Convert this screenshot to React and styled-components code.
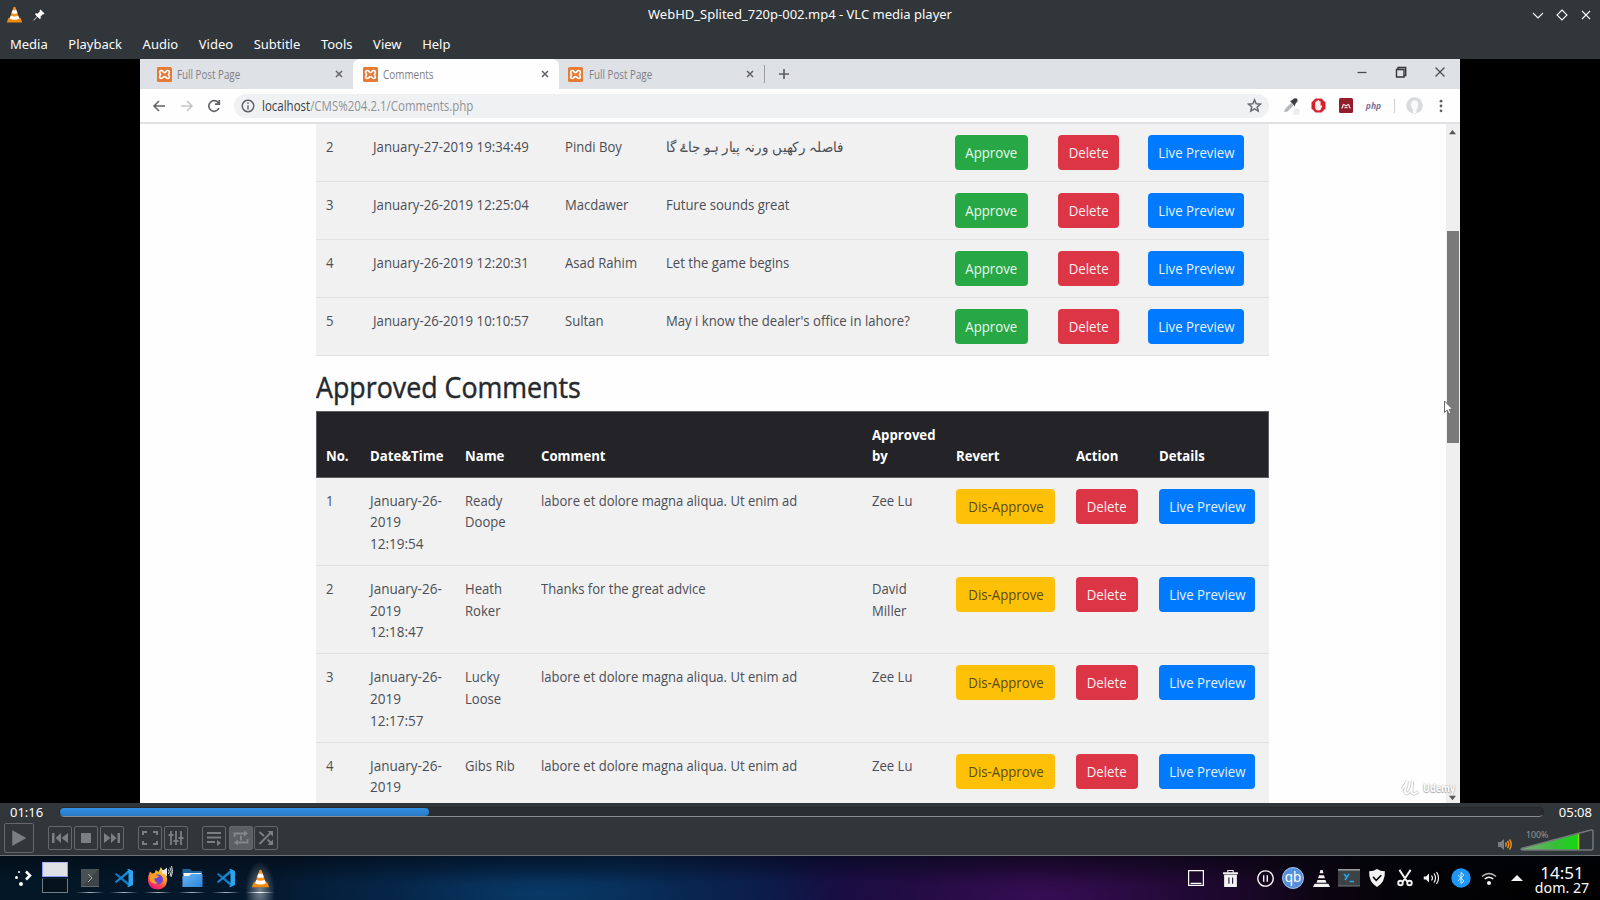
import React from "react";
import styled, { createGlobalStyle } from "styled-components";

const Global = createGlobalStyle`
  * { box-sizing: border-box; }
  html, body { margin: 0; padding: 0; background: #000; overflow: hidden; }
  svg { display: block; flex: none; }
`;

const Desktop = styled.div`
  width: 1600px;
  height: 900px;
  display: flex;
  flex-direction: column;
  font-family: "Noto Sans", "Open Sans", sans-serif;
  font-size: 13px;
  color: #fcfcfc;
  background: #31363b;
`;

/* ---------- player window ---------- */

const TitleBar = styled.header`
  height: 29px;
  display: grid;
  grid-template-columns: 200px 1fr 200px;
  align-items: center;
  padding-left: 6px;
  padding-right: 6px;
`;
const TitleLeft = styled.div`
  display: flex;
  align-items: center;
  gap: 10px;
`;
const TitleText = styled.div`
  text-align: center;
  padding-bottom: 1px;
`;
const TitleButtons = styled.div`
  display: flex;
  justify-content: flex-end;
  gap: 8px;
`;

const MenuBar = styled.nav`
  height: 30px;
  display: flex;
  align-items: center;
  gap: 20.6px;
  padding-left: 10px;
`;
const MenuItem = styled.span`
  line-height: 20px;
`;

const Stage = styled.main`
  height: 744px;
  background: #000;
  display: flex;
  justify-content: center;
`;

/* ---------- recorded browser ---------- */

const Browser = styled.section`
  position: relative;
  width: 1320px;
  height: 744px;
  overflow: hidden;
  display: flex;
  flex-direction: column;
  background: #fefefe;
  color: #4c4e55;
  font-family: "Open Sans", "Noto Sans", sans-serif;
`;
const Condensed = styled.span`
  display: inline-block;
  white-space: nowrap;
  transform: scaleX(${p => p.$by || 0.91});
  transform-origin: ${p => p.$origin || "left"} center;
`;

const TabStrip = styled.div`
  height: 30px;
  flex: none;
  display: flex;
  background: #dee1e6;
`;
const Tab = styled.div`
  width: ${p => p.$width}px;
  height: 30px;
  display: flex;
  align-items: center;
  padding: 0 9px 0 ${p => p.$pad}px;
  background: ${p => (p.$active ? "#fefefe" : "transparent")};
  border-radius: 7px 7px 0 0;
  font-size: 12.4px;
  color: #7e8086;
`;
const TabTitle = styled.div`
  flex: 1;
  padding-left: 5.5px;
`;
const TabDivider = styled.i`
  width: 1px;
  height: 18px;
  margin: 6px 12px 0 0;
  background: #9a9ca1;
`;
const NewTab = styled.div`
  display: flex;
  align-items: center;
  flex: 1;
`;
const WindowButtons = styled.div`
  display: flex;
  align-items: center;
  gap: 23px;
  padding: 0 12px 4px 0;
`;

const AddressBar = styled.div`
  height: 35px;
  flex: none;
  display: flex;
  align-items: center;
  padding-left: 11px;
  border-bottom: 2px solid #dfe1e4;
  background: #fefefe;
`;
const NavButtons = styled.div`
  display: flex;
  gap: 11.5px;
  width: 83px;
`;
const Omnibox = styled.div`
  width: 1035px;
  height: 24px;
  border-radius: 12px;
  background: #f0f1f3;
  display: flex;
  align-items: center;
  padding: 0 7px 0 7px;
  font-size: 13.6px;
  color: #919398;
`;
const Url = styled.div`
  flex: 1;
  padding-left: 7px;
  b { font-weight: 400; color: #3d3f43; }
`;
const Extensions = styled.div`
  flex: 1;
  display: grid;
  grid-template-columns: 28px 27px 28px 27px 14px 26px 28px;
  justify-items: center;
  align-items: center;
  padding-left: 8px;
`;
const PhpBadge = styled.span`
  font: italic 700 8.6px "Open Sans", sans-serif;
  color: #7a7399;
`;
const ThinRule = styled.i`
  width: 1px;
  height: 14px;
  background: #cdcfd2;
`;

const Viewport = styled.div`
  flex: 1;
  min-height: 0;
  display: flex;
  justify-content: space-between;
`;
const Content = styled.div`
  width: 953.5px;
  margin-left: 175.7px;
  overflow: hidden;
`;
const ScrollTrack = styled.div`
  width: 14.5px;
  height: 679px;
  background: #efeff0;
  display: flex;
  flex-direction: column;
  align-items: center;
  justify-content: space-between;
  padding: 5px 0 2px;
`;
const ScrollThumb = styled.div`
  width: 12px;
  height: 212px;
  margin-bottom: 256px;
  background: #7a7a7b;
`;

const Row = styled.div`
  display: grid;
  grid-template-columns: ${p => p.$columns};
  height: ${p => p.$height}px;
  padding-left: 10px;
  border-bottom: 1px solid #dee1e4;
  background: #f1f1f2;
  font-size: 14.4px;
  line-height: 21.6px;
`;
const Cell = styled.div`
  padding-top: ${p => p.$top || 12.4}px;
  white-space: pre-line;
`;
const HeadRow = styled(Row)`
  height: 67.3px;
  align-items: end;
  padding-bottom: 10px;
  background: #242428;
  border: 1px solid #5c5d61;
  padding-left: 9px;
  color: #fff;
  font-weight: 700;
`;
const HeadCell = styled.div`
  white-space: pre-line;
`;
const Heading = styled.h2`
  margin: 0;
  height: 54.6px;
  padding-top: 11.4px;
  font-size: 28.8px;
  line-height: 39px;
  font-weight: 500;
  -webkit-text-stroke: 0.45px #26292e;
  color: #26292e;
`;
const palette = {
  approve: ["#28a745", "#e9f8ec"],
  delete: ["#dc3545", "#fdeef0"],
  preview: ["#007bff", "#e6f2ff"],
  revert: ["#ffc107", "#5a4a14"],
};
const Action = styled.button`
  display: flex;
  align-items: center;
  justify-content: center;
  width: ${p => p.$width}px;
  height: 35px;
  margin: ${p => p.$top}px 0 0;
  padding: 0;
  border: 0;
  border-radius: 4px;
  background: ${p => palette[p.$kind][0]};
  color: ${p => palette[p.$kind][1]};
  font: 14.4px "Open Sans", sans-serif;
`;

const Pointer = styled.div`
  position: absolute;
  left: 1303px;
  top: 341px;
`;
const Watermark = styled.div`
  position: absolute;
  left: 1261px;
  top: 720px;
  display: flex;
  align-items: center;
  gap: 3px;
  font: 700 10.5px "Open Sans", sans-serif;
  color: #fff;
  text-shadow: 0 0 2px #8e8e8e, 0 1px 1px #b5b5b5;
`;

/* ---------- player controls ---------- */

const SeekRow = styled.div`
  height: 18px;
  flex: none;
  display: flex;
  align-items: center;
  justify-content: space-between;
  padding: 0 8px 0 10px;
`;
const SeekTrack = styled.div`
  width: 1485px;
  height: 10px;
  border: 1px solid #26292c;
  border-bottom-color: #8b8e90;
  border-radius: 5px;
  background: #2a2e32;
`;
const SeekFill = styled.div`
  width: 369px;
  height: 8px;
  border-radius: 4px;
  background: linear-gradient(#2f8fe3, #2a79c8);
`;
const Controls = styled.div`
  height: 34px;
  flex: none;
  display: flex;
  align-items: center;
  padding: 0 6px 0 4px;
`;
const ControlButton = styled.button`
  width: ${p => p.$size || 24}px;
  height: ${p => p.$size || 24}px;
  margin: 0 0 0 ${p => p.$gap || 0}px;
  padding: 0;
  display: flex;
  align-items: center;
  justify-content: center;
  border: 1px solid #64686b;
  border-radius: 2px;
  background: ${p => (p.$on ? "#5c6064" : "transparent")};
  color: #7c7f81;
`;
const Volume = styled.div`
  margin-left: auto;
  display: flex;
  align-items: flex-end;
  gap: 7px;
  padding-top: 4px;
`;
const VolumeMeter = styled.div`
  display: grid;
  width: 74px;
  > * { grid-area: 1 / 1; }
`;
const VolumeLabel = styled.span`
  padding-left: 6px;
  font-size: 8.8px;
  line-height: 13px;
  color: #92969a;
`;

/* ---------- desktop panel ---------- */

const Panel = styled.footer`
  height: 45px;
  flex: none;
  display: flex;
  align-items: center;
  border-top: 1px solid #6b7175;
  background:
    linear-gradient(180deg, rgba(0, 5, 12, 0.45), transparent 60%),
    radial-gradient(ellipse 300px 60px at 540px 38px, rgba(8, 62, 110, 0.85), rgba(6, 46, 88, 0.5) 50%, transparent),
    radial-gradient(ellipse 280px 60px at 1040px 40px, rgba(58, 14, 92, 0.8), rgba(42, 10, 70, 0.45) 55%, transparent),
    linear-gradient(90deg, #041726 0, #04182c 280px, #08244a 620px, #120f42 840px, #220a33 1040px, #160720 1220px, #040306 1400px, #000 1600px);
`;
const Launcher = styled.div`
  width: 42px;
  padding-left: 12px;
`;
const Pager = styled.div`
  width: 31px;
  display: grid;
  gap: 1px;
  padding-bottom: 2px;
`;
const PagerDesk = styled.div`
  width: 26px;
  height: 15px;
  border: 1px solid ${p => (p.$current ? "#8f9cff" : "#68808c")};
  border-top-color: ${p => (p.$current ? "#b8aef5" : "#102430")};
  background: ${p => (p.$current ? "#dfe1e4" : "#05121b")};
`;
const Task = styled.div`
  width: 34px;
  height: 44px;
  display: flex;
  align-items: center;
  justify-content: center;
  background:
    linear-gradient(90deg, transparent, ${p => (p.$active ? "#fff" : "#a9bac5")}, transparent) 50% 36px / 28px 1px no-repeat
    ${p => p.$active && ", radial-gradient(ellipse 15px 30px at 50% 80%, rgba(190,200,210,.6), transparent)"};
`;
const Tray = styled.div`
  margin-left: auto;
  display: flex;
  align-items: center;
`;
const TraySlot = styled.div`
  width: ${p => p.$width || 28}px;
  margin-right: ${p => p.$gap || 0}px;
  display: flex;
  justify-content: center;
`;
const Clock = styled.div`
  width: 69px;
  padding: 1px 7px 0 0;
  text-align: center;
  div:first-child { font-size: 17px; line-height: 17px; }
  div:last-child { font-size: 14.2px; line-height: 13px; }
`;

/* ---------- drawings ---------- */

const Cone = ({ size = 18 }) => (
  <svg width={size} height={size} viewBox="0 0 18 18">
    <path d="M2.6 12.5h12.8L17.2 17.4H.8z" fill="#f08a0c" />
    <path d="M8 1.2q1-1 2 0L14.3 14q-5.300 2.400-10.600 0z" fill="#f7931e" />
    <path d="M6.900 4.500h4.200l1.100 3.300q-3.200 1-6.400 0zM4.900 10.400q4.100 1.300 8.200 0l1 3q-5.100 2.400-10.200 0z" fill="#fff" />
  </svg>
);
const Pin = () => (
  <svg width="12" height="12" viewBox="0 0 12 12" fill="#fcfcfc">
    <path d="M7.500.5 11.500 4.500 10.400 5.400 9.800 5.200 7.600 7.400 7.700 9.400 6.700 10 4.400 7.800.8 11.500.4 11.100 4 7.400 2 5.300 2.700 4.300 4.800 4.400 6.900 2.200 6.600 1.500z" />
  </svg>
);
const Favicon = () => (
  <svg width="15" height="15" viewBox="0 0 15 15">
    <rect width="15" height="15" rx="1.500" fill="#e57a35" />
    <path d="M4.300 3.500c2 0 1.800 2 3.200 2s1.200-2 3.200-2c2.700 0 1.700 4 0 4 1.700 0 2.700 4 0 4-2 0-1.800-2-3.200-2s-1.200 2-3.200 2c-2.700 0-1.700-4 0-4-1.700 0-2.700-4 0-4z" fill="none" stroke="#fff" strokeWidth="1.700" />
  </svg>
);
const Line = ({ d, size = 16, color = "currentColor", width = 1.5, box = 16 }) => (
  <svg width={size} height={size} viewBox={`0 0 ${box} ${box}`} fill="none" stroke={color} strokeWidth={width}>
    <path d={d} />
  </svg>
);
const Solid = ({ d, size = 16, color = "currentColor", box = 16 }) => (
  <svg width={size} height={size} viewBox={`0 0 ${box} ${box}`} fill={color}>
    <path d={d} fillRule="evenodd" />
  </svg>
);
const CloseTab = () => <Line size={10} box={10} color="#64666b" width={1.6} d="M2 2l6 6M8 2L2 8" />;

const VsCode = () => (
  <svg width="20" height="20" viewBox="0 0 20 20">
    <path d="M.8 6.300 2.300 5 15 15v3.500z" fill="#0f7ac5" />
    <path d="M.8 13.700 2.300 15 15 5V1.500z" fill="#1787d4" />
    <path d="M14 .7 19 3v14l-5 2.300-.8-.8 1.300-.8V2.300l-1.300-.8z" fill="#2aa7f2" />
  </svg>
);
const Firefox = () => (
  <svg width="30" height="26" viewBox="-2 0 30 26">
    <defs>
      <linearGradient id="fox" x1="0.800" y1="0" x2="0.300" y2="1">
        <stop offset="0" stopColor="#ffe63b" />
        <stop offset="0.450" stopColor="#ff9a1f" />
        <stop offset="0.750" stopColor="#ff3f4e" />
        <stop offset="1" stopColor="#e31587" />
      </linearGradient>
    </defs>
    <path d="M4 9 5 6.500 7 8.500 9.500 8 11 5l2.500 2L16 2q1.500 4 4 6.500 2.500 3 2 7.500-1 8-9 8.500-8.500 0-10-8Q2.500 12 4 9z" fill="url(#fox)" />
    <circle cx="13" cy="14.500" r="5" fill="#7243d8" />
    <path d="M4.500 10q4-1.500 7.500.5l2 1q-1.500 2-4.500 1.700Q9 16.500 13 18q-5 2-8-2z" fill="#ff9e25" />
    <path d="M17 5h2l3-2.500v9L19 8.500h-2z" fill="#e9e9e9" />
    <path d="M23.500 4.500q1.500 2 0 4.500M25 2.500q2.500 4 0 8.500M26.500 1q2.500 5.500-.5 11" stroke="#dcdcdc" fill="none" />
  </svg>
);
const Folder = () => (
  <svg width="21" height="20" viewBox="0 0 21 20">
    <defs>
      <linearGradient id="fold" x1="0" y1="0" x2="1" y2="1">
        <stop offset="0" stopColor="#69b5f5" />
        <stop offset="1" stopColor="#2a86dc" />
      </linearGradient>
    </defs>
    <path d="M.5 1h7.500l2 2h10v4H.5z" fill="#1f659d" />
    <path d="M1.500 5h18v4h-18z" fill="#f4f4f4" />
    <path d="M.5 8h6.500l2-2h11.500v13H.5z" fill="url(#fold)" />
  </svg>
);
const Konsole = () => (
  <svg width="18" height="18" viewBox="0 0 18 18">
    <rect width="18" height="18" fill="#4a5154" />
    <path d="M0 18 18 0v18z" fill="#3d4447" />
    <path d="M7 5l4 4-4 4" stroke="#a6acae" fill="none" />
    <path d="M0 17.500h18" stroke="#62686b" />
  </svg>
);

const speakerPath = "M1 6h3l4-4v12l-4-4H1z";

/* ---------- data ---------- */

const menus = ["Media", "Playback", "Audio", "Video", "Subtitle", "Tools", "View", "Help"];

const pending = [
  ["2", "January-27-2019 19:34:49", "Pindi Boy", "فاصلہ رکھیں ورنہ پیار ہو جاۓ گا"],
  ["3", "January-26-2019 12:25:04", "Macdawer", "Future sounds great"],
  ["4", "January-26-2019 12:20:31", "Asad Rahim", "Let the game begins"],
  ["5", "January-26-2019 10:10:57", "Sultan", "May i know the dealer's office in lahore?"],
];
const lorem = "labore et dolore magna aliqua. Ut enim ad";
const approved = [
  ["1", "January-26-\n2019\n12:19:54", "Ready\nDoope", lorem, "Zee Lu"],
  ["2", "January-26-\n2019\n12:18:47", "Heath\nRoker", "Thanks for the great advice", "David\nMiller"],
  ["3", "January-26-\n2019\n12:17:57", "Lucky\nLoose", lorem, "Zee Lu"],
  ["4", "January-26-\n2019", "Gibs Rib", lorem, "Zee Lu"],
];
const pendingColumns = "47px 192.300px 101.200px 288.500px 103px 90px 1fr";
const approvedColumns = "44.400px 94.600px 76px 331px 84.800px 120px 82.400px 1fr";

const Text = styled(Condensed)`
  white-space: pre;
`;

function ActionButton({ kind, width, top, children }) {
  return (
    <Action $kind={kind} $width={width} $top={top}>
      <Condensed $origin="center" $by={0.92}>{children}</Condensed>
    </Action>
  );
}

function BrowserTab({ title, width, pad, active }) {
  return (
    <Tab $width={width} $pad={pad} $active={active}>
      <Favicon />
      <TabTitle><Condensed $by={active ? 0.8 : 0.79}>{title}</Condensed></TabTitle>
      <CloseTab />
    </Tab>
  );
}

function RecordedBrowser() {
  return (
    <Browser>
      <TabStrip>
        <BrowserTab title="Full Post Page" width={213} pad={16.5} />
        <BrowserTab title="Comments" width={205.5} pad={9.5} active />
        <BrowserTab title="Full Post Page" width={205.500} pad={9.5} />
        <TabDivider />
        <NewTab><Line size={14} box={14} color="#5d5f64" width={1.7} d="M7 2v10M2 7h10" /></NewTab>
        <WindowButtons>
          <Line size={16} color="#4a4c50" width={1.3} d="M3.500 8.500h9" />
          <Line size={16} color="#33353a" width={1.4} d="M3.500 5.500h7.500v7.500h-7.500zM5 5V3.500h7.700v8H11" />
          <Line size={16} color="#4a4c50" width={1.3} d="M3.500 3.500l9 9M12.500 3.500l-9 9" />
        </WindowButtons>
      </TabStrip>
      <AddressBar>
        <NavButtons>
          <Line color="#606266" d="M14 8H3M8 3L3 8l5 5" />
          <Line color="#c3c5c8" d="M2 8h11M8 3l5 5-5 5" />
          <Line color="#606266" width={1.7} d="M12.500 5A5.300 5.300 0 1 0 13 10M13.300 2v4.200H9" />
        </NavButtons>
        <Omnibox>
          <Line size={14} color="#5f6165" width={1.6} d="M8 1.500a6.500 6.500 0 1 0 .01 0M8 7v5M8 4v1.600" />
          <Url><Condensed $by={0.845}><b>localhost</b>/CMS%204.2.1/Comments.php</Condensed></Url>
          <Line size={15} color="#66686c" width={1.6} d="M8 2l1.800 4.100 4.500.4-3.400 3 1 4.400L8 11.600l-3.900 2.300 1-4.400-3.400-3 4.500-.4z" />
        </Omnibox>
        <Extensions>
          <svg width="18" height="18" viewBox="0 0 18 18">
            <path d="M2 15l1-3 6-6 2.500 2.500-6 6z" fill="#b5b7b9" />
            <path d="M8 4l1.500-.5L12 1.500q2.500-1 3.500 1 .5 2-1 3l-1.300 1.700-.2 2.300z" fill="#3c3e42" />
            <circle cx="14.500" cy="15" r="3.500" fill="#eeeeef" />
          </svg>
          <svg width="15" height="15" viewBox="0 0 15 15">
            <path d="M4.500.5h6l4 4v6l-4 4h-6l-4-4v-6z" fill="#d8202c" />
            <path d="M4.200 7V4.200q.7-.8 1.200 0V3q.8-.9 1.400 0v-.5q.8-.8 1.400 0V3.500q.8-.8 1.400 0V8l1-.8q1 0 .6 1l-1.500 3.300q-.8 1-2 1-3 .2-3.500-2.500z" fill="#fff3f0" />
          </svg>
          <svg width="14" height="15" viewBox="0 0 14 15">
            <rect width="14" height="15" rx="1.500" fill="#941d2b" />
            <path d="M2.500 10q1.200 0 1.300-2 .4-2 1.400-1.300L7 7.800l1.800-1.100q1-.7 1.400 1.300.1 2 1.300 2M5.500 10Q7 8.800 8.500 10" stroke="#f4dfe1" strokeWidth="1.300" fill="none" />
          </svg>
          <PhpBadge>php</PhpBadge>
          <ThinRule />
          <svg width="17" height="17" viewBox="0 0 17 17">
            <circle cx="8.500" cy="8.500" r="8.300" fill="#d9dadb" />
            <ellipse cx="8.700" cy="8" rx="3.600" ry="4.800" fill="#fafafa" />
            <path d="M7 11h3.500v5H7z" fill="#fafafa" />
          </svg>
          <svg width="4" height="14" viewBox="0 0 4 14" fill="#5f6165">
            <circle cx="2" cy="2.200" r="1.400" /><circle cx="2" cy="7" r="1.400" /><circle cx="2" cy="11.800" r="1.400" />
          </svg>
        </Extensions>
      </AddressBar>

      <Viewport>
        <Content>
          {pending.map(([no, date, name, comment]) => (
            <Row key={no} $columns={pendingColumns} $height={58}>
              <Cell><Text>{no}</Text></Cell>
              <Cell><Text $by={0.917}>{date}</Text></Cell>
              <Cell><Text>{name}</Text></Cell>
              <Cell><Text $by={no === "2" ? 0.96 : 0.912}>{comment}</Text></Cell>
              <ActionButton kind="approve" width={73.5} top={11}>Approve</ActionButton>
              <ActionButton kind="delete" width={61.5} top={11}>Delete</ActionButton>
              <ActionButton kind="preview" width={96.5} top={11}>Live Preview</ActionButton>
            </Row>
          ))}
          <Heading><Condensed $by={0.93}>Approved Comments</Condensed></Heading>
          <HeadRow $columns={approvedColumns}>
            {["No.", "Date&Time", "Name", "Comment", "Approved\nby", "Revert", "Action", "Details"].map(h => (
              <HeadCell key={h}><Text $by={0.915}>{h}</Text></HeadCell>
            ))}
          </HeadRow>
          {approved.map(([no, date, name, comment, by]) => (
            <Row key={no} $columns={approvedColumns} $height={88.3}>
              <Cell $top={12}><Text>{no}</Text></Cell>
              <Cell $top={12}><Text $by={0.94}>{date}</Text></Cell>
              <Cell $top={12}><Text>{name}</Text></Cell>
              <Cell $top={12}><Text $by={0.905}>{comment}</Text></Cell>
              <Cell $top={12}><Text>{by}</Text></Cell>
              <ActionButton kind="revert" width={98.500} top={11}>Dis-Approve</ActionButton>
              <ActionButton kind="delete" width={61.500} top={11}>Delete</ActionButton>
              <ActionButton kind="preview" width={96.500} top={11}>Live Preview</ActionButton>
            </Row>
          ))}
        </Content>
        <ScrollTrack>
          <Solid size={7} box={8} color="#55575a" d="M4 1l4 5H0z" />
          <ScrollThumb />
          <Solid size={7} box={8} color="#55575a" d="M0 2h8L4 7z" />
        </ScrollTrack>
      </Viewport>

      <Pointer>
        <svg width="12" height="16" viewBox="0 0 12 16">
          <path d="M1.500 1v11.500l2.700-2.400 1.800 4 2-1-1.800-3.800h3.500z" fill="#fff" stroke="#6a6a6c" />
        </svg>
      </Pointer>
      <Watermark>
        <svg width="19" height="18" viewBox="0 0 19 18">
          <path d="M1 10Q5 5 6 2q0 5-2 9-.5 4 2.500 3.500Q11 12 11.500 2q-1 7-.8 11 1.300 4 6.800-.5" fill="none" stroke="#c4c4c4" strokeWidth="3.400" />
          <path d="M1 10Q5 5 6 2q0 5-2 9-.5 4 2.500 3.500Q11 12 11.500 2q-1 7-.8 11 1.300 4 6.800-.5" fill="none" stroke="#fff" strokeWidth="1.900" />
        </svg>
        <Condensed $by={0.87}>Udemy</Condensed>
      </Watermark>
    </Browser>
  );
}

export default function App() {
  return (
    <Desktop>
      <Global />
      <TitleBar>
        <TitleLeft><Cone size={17} /><Pin /></TitleLeft>
        <TitleText>WebHD_Splited_720p-002.mp4 - VLC media player</TitleText>
        <TitleButtons>
          <Line width={1.1} d="M3 6l5 5 5-5" />
          <Line width={1.1} d="M8 3l5 5-5 5-5-5z" />
          <Line width={1.1} d="M4 4l8 8M12 4l-8 8" />
        </TitleButtons>
      </TitleBar>
      <MenuBar>{menus.map(m => <MenuItem key={m}>{m}</MenuItem>)}</MenuBar>

      <Stage><RecordedBrowser /></Stage>

      <SeekRow>
        <span>01:16</span>
        <SeekTrack><SeekFill /></SeekTrack>
        <span>05:08</span>
      </SeekRow>
      <Controls>
        <ControlButton $size={30}><Solid size={18} d="M2 1l12.500 7L2 15z" /></ControlButton>
        <ControlButton $gap={14}><Solid d="M0 3h2.500v10H0zM9 3v10L3.500 8zM16 3v10L9.500 8z" /></ControlButton>
        <ControlButton $gap={2}><Solid d="M3 3h10v10H3z" /></ControlButton>
        <ControlButton $gap={2}><Solid d="M16 3h-2.500v10H16zM7 3v10l5.500-5zM0 3v10l6.500-5z" /></ControlButton>
        <ControlButton $gap={14}><Line width={2} d="M1 5V2h4M11 2h4v3M15 11v3h-4M5 14H1v-3" /></ControlButton>
        <ControlButton $gap={2}><Line width={1.8} d="M3 1v14M8 1v14M13 1v14M.5 5h5M5.500 11h5M10.500 8h5" /></ControlButton>
        <ControlButton $gap={14}>
          <svg width="16" height="16" viewBox="0 0 16 16" fill="currentColor">
            <path d="M1 2h14v2H1zM1 6.500h14v2H1zM1 11h8v2H1zM11 10l4 3-4 3z" />
          </svg>
        </ControlButton>
        <ControlButton $gap={3} $on>
          <svg width="16" height="16" viewBox="0 0 16 16" fill="none" stroke="#85888a" strokeWidth="1.800">
            <path d="M1.500 7V3.500H12M14.500 9v3.500H4M8 6v4.500M7 6.500h1" />
            <path d="M11 .5l4 3-4 3zM5 9.500l-4 3 4 3z" fill="#85888a" stroke="none" />
          </svg>
        </ControlButton>
        <ControlButton $gap={1}>
          <svg width="16" height="16" viewBox="0 0 16 16" fill="none" stroke="currentColor" strokeWidth="2">
            <path d="M1.500 2l4.500 4M9.500 9.500l4 4M1.500 14L13 2.500" />
            <path d="M9.500 1H15v5.500zM15 9.500V15H9.500z" fill="currentColor" stroke="none" />
          </svg>
        </ControlButton>
        <Volume>
          <svg width="15" height="13" viewBox="0 0 15 13">
            <path d="M0 4h2.500L6 1v11L2.500 9H0z" fill="#7c7f81" />
            <path d="M7.500 4.500q1.500 2 0 4M9.500 3q2.500 3.500 0 7M11.500 1.500q3.500 5 0 10" stroke="#f0911b" strokeWidth="1.400" fill="none" />
          </svg>
          <VolumeMeter>
            <svg width="74" height="22" viewBox="0 0 74 22">
              <defs>
                <linearGradient id="vol"><stop offset="0" stopColor="#7fae7c" /><stop offset="0.450" stopColor="#3dbb3d" /><stop offset="0.780" stopColor="#12d812" /><stop offset="1" stopColor="#12d812" /></linearGradient>
                <clipPath id="level"><rect width="59" height="22" /></clipPath>
              </defs>
              <path d="M1.500 19.500Q0 20.500 2 21H73V1z" fill="url(#vol)" clipPath="url(#level)" />
              <path d="M58.500 5v16" stroke="#9fd014" strokeWidth="1.500" />
              <path d="M2 19.300Q0 20.500 2 21H71q2 0 2-2V2.500Q73 .5 71 1z" fill="none" stroke="#74787a" strokeWidth="1.500" />
            </svg>
            <VolumeLabel>100%</VolumeLabel>
          </VolumeMeter>
        </Volume>
      </Controls>

      <Panel>
        <Launcher>
          <svg width="22" height="20" viewBox="0 0 22 20">
            <g fill="#fff"><circle cx="4.500" cy="9.500" r="1.500" /><circle cx="7" cy="4" r="1" /><circle cx="9" cy="16" r="2" /></g>
            <path d="M14 3.500l4 4-4 4" stroke="#fff" strokeWidth="2.600" fill="none" />
          </svg>
        </Launcher>
        <Pager><PagerDesk $current /><PagerDesk /></Pager>
        <Task><Konsole /></Task>
        <Task><VsCode /></Task>
        <Task><Firefox /></Task>
        <Task><Folder /></Task>
        <Task><VsCode /></Task>
        <Task $active><Cone size={19} /></Task>

        <Tray>
          <TraySlot $width={35}><Line width={1.2} d="M.6.6h14.800v14.800H.6zM2.500 13.300h11" /></TraySlot>
          <TraySlot $width={35} $gap={3}><Solid size={17} color="#f3f3f3" d="M5 0h6v2h4v2H1V2h4zM6 1v1h4V1zM2 4.500h12V16H2zM6 7v6h1V7zM9.500 7v6h1V7z" /></TraySlot>
          <TraySlot><Line size={17} width={1.3} d="M8 .8a7.200 7.200 0 1 0 .01 0M6.300 5v6M9.700 5v6" /></TraySlot>
          <TraySlot>
            <svg width="22" height="22" viewBox="0 0 22 22">
              <circle cx="11" cy="11" r="10.500" fill="#5690dd" stroke="#a3c4ee" />
              <text x="11" y="15" textAnchor="middle" fill="#fff" fontSize="13.500" fontFamily="Noto Sans">qb</text>
            </svg>
          </TraySlot>
          <TraySlot><Solid size={17} color="#f3f3f3" d="M7 0h2l.8 3H6.200zM5.700 5h4.600l.9 2.800H4.800zM4.200 9.500h7.600l.8 2.500H3.400zM1.500 13h13l1.500 3H0z" /></TraySlot>
          <TraySlot>
            <svg width="22" height="18" viewBox="0 0 22 18">
              <rect width="22" height="17" fill="#3c4246" />
              <path d="M0 .8h22" stroke="#9da1a3" strokeWidth="1.500" /><path d="M0 17h22" stroke="#747a7d" />
              <path d="M6 5l2.500 3M11 5l-4 6M11.500 12.500h4.500" stroke="#2ba5e8" strokeWidth="1.600" fill="none" />
            </svg>
          </TraySlot>
          <TraySlot><Solid size={18} color="#f3f3f3" d="M8 0q3 2 7 2 .5 9.500-7 14Q.5 11.500 1 2q4 0 7-2zM4 7.500l3.300 3.500 5-5-1-1-4 4-2.300-2.500z" /></TraySlot>
          <TraySlot><Line size={18} color="#f3f3f3" width={1.7} d="M3 .8l7.300 11M13 .8l-7.300 11M6 12.500a2 2 0 1 1-4 0a2 2 0 1 1 4 0M14 12.500a2 2 0 1 1-4 0a2 2 0 1 1 4 0" /></TraySlot>
          <TraySlot>
            <svg width="21" height="16" viewBox="0 0 21 16">
              <path d={speakerPath} transform="translate(0 2) scale(.75)" fill="#f3f3f3" />
              <path d="M8.500 5.500q2 2.500 0 5M11 3.500q3 4.500 0 9M13.500 2q4 6 0 12" stroke="#f3f3f3" strokeWidth="1.200" fill="none" />
            </svg>
          </TraySlot>
          <TraySlot>
            <svg width="20" height="20" viewBox="0 0 20 20">
              <circle cx="10" cy="10" r="9.700" fill="#1f97f7" />
              <path d="M6.800 7l6.200 6-3 2.500v-11L13 7l-6.200 6" stroke="#d8eeff" fill="none" />
            </svg>
          </TraySlot>
          <TraySlot>
            <svg width="16" height="16" viewBox="0 0 16 16" fill="none">
              <path d="M1 6.500q7-6 14 0" stroke="#bdbdbd" strokeWidth="1.300" />
              <path d="M3.700 9q4.300-3.600 8.600 0" stroke="#f3f3f3" strokeWidth="1.500" />
              <circle cx="8" cy="13" r="2" fill="#f3f3f3" />
            </svg>
          </TraySlot>
          <TraySlot><Solid size={12} color="#f3f3f3" box={12} d="M6 3l6 6H0z" /></TraySlot>
          <Clock><div>14:51</div><div>dom. 27</div></Clock>
        </Tray>
      </Panel>
    </Desktop>
  );
}
